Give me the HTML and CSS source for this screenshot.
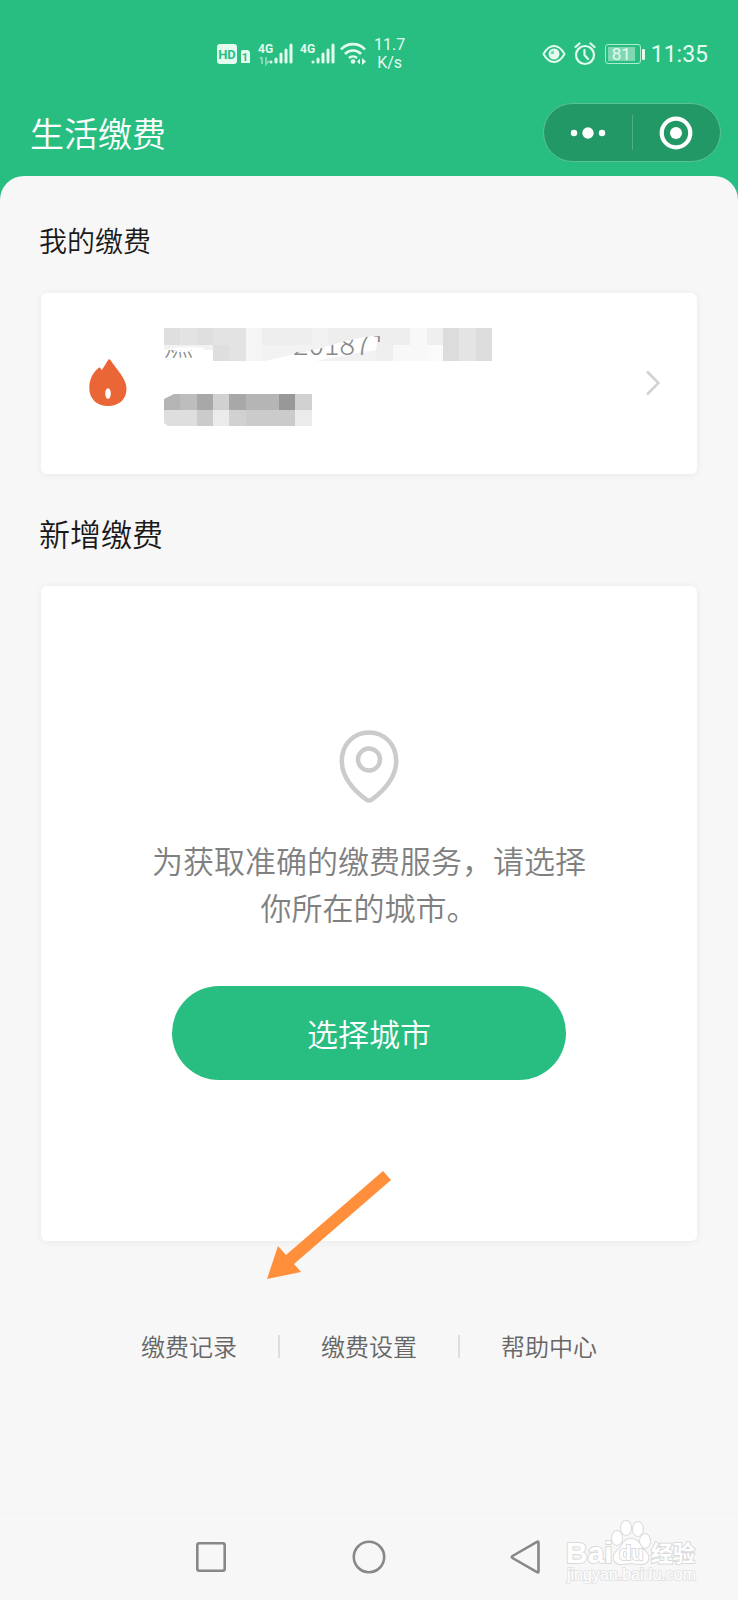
FILE: index.html
```
<!DOCTYPE html>
<html lang="zh-CN">
<head>
<meta charset="utf-8">
<meta name="viewport" content="width=device-width, initial-scale=1">
<title>生活缴费</title>
<link rel="stylesheet" href="styles.css">
</head>
<body>
<div class="status">
  <div class="status-left">
    <svg width="132" height="28" viewBox="0 0 132 28" aria-hidden="true">
      <rect x="0" y="4" width="20" height="20" rx="3" fill="#e4fbf0"/>
      <text x="10" y="19" class="hd">HD</text>
      <path d="M26 10h5l2 2v11h-9V12a2 2 0 0 1 2-2z" fill="#e4fbf0"/>
      <text x="28" y="21" class="sim">1</text>
      <text x="41" y="13" class="gen">4G</text>
      <path d="M45 17v7M43 19l2-2M49 17v7l3-3" fill="none" stroke="#7fd8b3" stroke-width="2"/>
      <g stroke="#e4fbf0" stroke-width="3" stroke-linecap="round">
        <path d="M54 22v0M59 19v3M64 14v8M69 10v12M74 5v17"/>
        <path d="M96 22v0M101 19v3M106 14v8M111 10v12M116 5v17"/>
      </g>
      <text x="83" y="13" class="gen">4G</text>
    </svg>
    <svg width="26" height="24" viewBox="0 0 26 24" aria-hidden="true">
      <g fill="none" stroke="#e4fbf0" stroke-width="2.6">
        <path d="M1 7.500a16 16 0 0 1 24 0M5 12a11 11 0 0 1 16 0M9 16a6 6 0 0 1 8 0"/>
      </g>
      <circle cx="13" cy="19.500" r="2.300" fill="#e4fbf0"/>
      <path d="M17 19.500l3-3v6zM26 19.500l-4-3.500v7z" fill="#e4fbf0"/>
    </svg>
    <div class="speed">11.7<br>K/s</div>
  </div>
  <div class="status-right">
    <svg width="24" height="20" viewBox="0 0 24 20" aria-hidden="true">
      <path d="M1.500 10Q6 2 12 2t10.500 8Q18 18 12 18T1.500 10z" fill="none" stroke="#e4fbf0" stroke-width="2"/>
      <circle cx="12" cy="10" r="5.500" fill="#e4fbf0"/>
      <path d="M8.500 10A3.500 3.500 0 0 1 12 6.500V10z" fill="#7fd8b3"/>
    </svg>
    <svg width="22" height="24" viewBox="0 0 22 24" aria-hidden="true">
      <g fill="none" stroke="#e4fbf0" stroke-width="2.200" stroke-linecap="round" stroke-linejoin="round">
        <circle cx="11" cy="13" r="9"/>
        <path d="M10.500 8v5l3.500 4M1.500 5l4-3.500M20.500 5l-4-3.500"/>
      </g>
    </svg>
    <div class="battery"><span class="level">81</span></div>
    <div class="clock">11:35</div>
  </div>
</div>
<header class="titlebar">
  <h1>生活缴费</h1>
  <div class="capsule">
    <button type="button" aria-label="更多">
      <svg width="36" height="12" viewBox="0 0 36 12"><g fill="#fff"><circle cx="4" cy="6" r="3.200"/><circle cx="18" cy="6" r="5.700"/><circle cx="32" cy="6" r="3.200"/></g></svg>
    </button>
    <span class="split"></span>
    <button type="button" aria-label="关闭">
      <svg width="34" height="34" viewBox="0 0 34 34"><circle cx="17" cy="17" r="14.300" fill="none" stroke="#fff" stroke-width="4.200"/><circle cx="17" cy="17" r="6" fill="#fff"/></svg>
    </button>
  </div>
</header>
<main class="panel">
  <h2 class="mine">我的缴费</h2>
  <a class="card account" href="#account">
    <svg class="flame" width="38" height="47" viewBox="0 0 38 47" aria-hidden="true">
      <path d="M19.500.500Q20.500-.3 21.500 1C26 9 37.500 19 37.500 29.500 37.500 40.500 30 47 19 47S.3 40 .3 29C.3 20 4 13.500 9.500 9c1-.8 2-.5 3 2.300C15 8 17 4 19.500.5z" fill="#eb6637"/>
      <ellipse cx="19" cy="34.500" rx="2.800" ry="5.200" fill="#fff"/>
    </svg>
    <svg class="masked" width="328" height="100" viewBox="0 0 328 100" role="img" aria-label="已隐藏的账户">
      <defs>
        <clipPath id="seen">
          <path d="M0 22h28v13H0zM128 25l30-5 20-6 13-3 17-3h8v6h-9v16h-79z"/>
        </clipPath>
      </defs>
      <g shape-rendering="crispEdges">
        <path fill="#dfdfdf" d="M0 0h16v17H0zM33 0h16v17H33z"/>
        <path fill="#e3e3e3" d="M16 0h17v17H16zM49 0h33v17H49zM65 17h17v16H65z"/>
        <path fill="#f5f5f5" d="M82 0h16v33H82z"/>
        <path fill="#eee" d="M98 0h50v17H98zM164 0h82v17H164z"/>
        <path fill="#f2f2f2" d="M148 0h16v17H148zM98 17h114v16H98zM0 17h49v5H0z"/>
        <path fill="#dedede" d="M49 17h16v16H49z"/>
        <path fill="#f8f8f8" d="M246 0h17v17H246zM229 17h34v16H229z"/>
        <path fill="#efefef" d="M263 0h16v17H263zM212 17h17v16H212z"/>
        <path fill="#fafafa" d="M263 17h16v16H263z"/>
        <path fill="#dcdcdc" d="M279 0h16v33H279zM312 0h16v33H312z"/>
        <path fill="#e4e4e4" d="M295 0h17v33H295z"/>
        <path fill="#b4b4b4" d="M0 66h16v16H0z"/>
        <path fill="#bdbdbd" d="M16 66h17v16H16z"/>
        <path fill="#a8a8a8" d="M33 66h16v16H33zM65 66h17v16H65z"/>
        <path fill="#d1d1d1" d="M49 66h16v16H49zM131 66h17v16h-17zM65 82h17v16H65z"/>
        <path fill="#b5b5b5" d="M82 66h33v16H82z"/>
        <path fill="#989898" d="M115 66h16v16h-16z"/>
        <path fill="#dedede" d="M0 82h33v16H0z"/>
        <path fill="#cbcbcb" d="M33 82h16v16H33zM82 82h49v16H82z"/>
        <path fill="#ebebeb" d="M49 82h16v16H49zM131 82h17v16h-17z"/>
      </g>
      <path fill="#fff" d="M0 22q20-5 40-2 0 8 8 13H0zM101 33l57-13 20-6 13-3 17-3 6 2-2 12-12 2-44 9zM0 66h10L0 71zM0 95l4 3H0z"/>
      <path fill="#f2f2f2" d="M152 33l46-9 14-1v10z"/>
      <g clip-path="url(#seen)" class="acct-text">
        <text x="0" y="28">燃</text>
        <text x="129" y="27">201871</text>
      </g>
    </svg>
    <svg class="chevron" width="16" height="26" viewBox="0 0 16 26" aria-hidden="true"><path d="M2 1.500L13.500 13 2 24.500" fill="none" stroke="#d2d2d2" stroke-width="2.500"/></svg>
  </a>
  <h2 class="new">新增缴费</h2>
  <section class="card city">
    <svg width="60" height="74" viewBox="0 0 60 74" aria-hidden="true">
      <g fill="none" stroke="#cbcbcb" stroke-width="4.500" stroke-linejoin="round">
        <path d="M30 2.500C14.500 2.500 2.800 14.500 2.800 31c0 16 12 30 24.700 38.700q2.500 1.600 5 0C45.200 61 57.200 47 57.200 31 57.200 14.500 45.500 2.500 30 2.500z"/>
        <circle cx="30" cy="29.500" r="11"/>
      </g>
    </svg>
    <p>为获取准确的缴费服务，请选择你所在的城市。</p>
    <button type="button" class="pick">选择城市</button>
    <svg class="arrow" width="124" height="110" viewBox="0 0 124 110" aria-hidden="true"><path d="M116 0l8 9-97 84 7 8-34 7 11-33 8 9z" fill="#ff8f3b"/></svg>
  </section>
  <nav class="links">
    <a href="#records">缴费记录</a>
    <a href="#settings">缴费设置</a>
    <a href="#help">帮助中心</a>
  </nav>
</main>
<footer class="sysnav">
  <button type="button" aria-label="最近任务"><svg width="34" height="34" viewBox="0 0 34 34"><rect x="3.300" y="3.300" width="27.400" height="27.400" rx="2"/></svg></button>
  <button type="button" aria-label="主屏幕"><svg width="34" height="34" viewBox="0 0 34 34"><circle cx="17" cy="17" r="15.200"/></svg></button>
  <button type="button" aria-label="返回"><svg width="34" height="34" viewBox="0 0 34 34"><path d="M27 1.800q1.500-.8 1.500 1v28.400q0 1.800-1.500 1L2.500 18q-1.500-1 0-2z"/></svg></button>
  <svg class="watermark" width="136" height="66" viewBox="0 0 136 66" role="img" aria-label="Baidu经验">
    <g class="mark">
      <ellipse cx="51" cy="17" rx="5" ry="7"/>
      <ellipse cx="60" cy="7" rx="5" ry="7"/>
      <ellipse cx="72" cy="8" rx="5" ry="7"/>
      <ellipse cx="79" cy="20" rx="5" ry="7"/>
      <path d="M65 18c8 0 9 7 13 11 9 8 3 15-5 14-6-1-10-1-16 0-9 1-13-7-5-14 5-4 5-11 13-11z"/>
      <text x="0" y="42" class="bai">Bai</text>
      <text x="53" y="39" class="du">du</text>
      <text x="85" y="40" class="exp">经验</text>
      <text x="1" y="59" class="site">jingyan.baidu.com</text>
    </g>
  </svg>
</footer>
</body>
</html>
```

FILE: styles.css
```
* {
  box-sizing: border-box;
}

body {
  margin: 0;
  min-height: 100vh;
  display: flex;
  flex-direction: column;
  background: #28be82;
  color: #1a1a1a;
  font-family: "Noto Sans CJK SC", sans-serif;
  font-weight: 350;
}

h1,
h2,
p {
  margin: 0;
  font-weight: 350;
}

button {
  border: 0;
  padding: 0;
  background: none;
  font: inherit;
  cursor: pointer;
}

a {
  color: inherit;
  text-decoration: none;
}

svg {
  display: block;
  flex: none;
}

.status {
  display: flex;
  justify-content: space-between;
  align-items: center;
  height: 92px;
  padding: 16px 30px 0 217px;
  color: #e4fbf0;
  font-family: Roboto, sans-serif;
  font-weight: 400;
}

.status-left {
  display: flex;
  align-items: center;
}

.status-left svg + svg {
  margin-left: -9px;
}

.hd,
.sim,
.gen {
  font-family: Roboto, sans-serif;
  font-weight: 700;
}

.hd {
  font-size: 13px;
  text-anchor: middle;
  fill: #28be82;
}

.sim {
  font-size: 11px;
  text-anchor: middle;
  fill: #28be82;
}

.gen {
  font-family: "Liberation Sans Narrow", Roboto, sans-serif;
  font-size: 12px;
  fill: #e4fbf0;
}

.speed {
  margin-left: 8px;
  font-size: 16px;
  line-height: 18px;
  text-align: center;
}

.status-right {
  display: flex;
  align-items: center;
  gap: 8px;
}

.battery {
  position: relative;
  width: 36px;
  height: 20px;
  margin: 0 2px 0 1px;
  padding: 2px;
  border: 1px solid #a9ecd0;
  border-radius: 3px;
}

.battery::after {
  content: "";
  position: absolute;
  left: 36px;
  top: 4px;
  width: 3px;
  height: 11px;
  border-radius: 1px;
  background: #e4fbf0;
}

.level {
  display: block;
  width: 27px;
  height: 14px;
  background: #7fd8b3;
  font-size: 17px;
  line-height: 15px;
  text-align: center;
}

.clock {
  font-size: 23px;
}

.titlebar {
  display: flex;
  justify-content: space-between;
  align-items: center;
  height: 84px;
  padding: 0 17px 3px 30px;
  color: #fff;
}

h1 {
  font-size: 34px;
  line-height: 48px;
}

.capsule {
  display: flex;
  align-items: center;
  width: 178px;
  height: 59px;
  border: 1px solid #5cc099;
  border-radius: 30px;
  background: #229867;
}

.capsule button {
  flex: 1;
  height: 100%;
  display: flex;
  align-items: center;
  justify-content: center;
}

.split {
  width: 1px;
  height: 35px;
  background: #4eae86;
}

.panel {
  flex: 1;
  padding: 40px 41px;
  border-radius: 24px 24px 0 0;
  background: #f7f7f7;
}

h2 {
  line-height: 48px;
  margin-left: -2px;
}

.mine {
  font-size: 28px;
}

.new {
  margin-top: 35px;
  font-size: 31px;
}

.card {
  position: relative;
  border-radius: 6px;
  background: #fff;
  box-shadow: 0 1px 8px rgba(0, 0, 0, 0.06);
}

.account {
  display: flex;
  align-items: center;
  height: 181px;
  margin-top: 29px;
  padding: 0 36px 2px 48px;
}

.flame {
  margin-right: 37px;
}

.masked {
  margin-bottom: 10px;
}

.acct-text {
  font-size: 29px;
  font-weight: 300;
  fill: #888;
}

.chevron {
  margin-left: auto;
}

.city {
  display: flex;
  flex-direction: column;
  align-items: center;
  margin-top: 29px;
  padding: 144px 48px 161px;
}

.city p {
  width: 100%;
  max-width: 448px;
  margin-top: 32px;
  color: #808080;
  font-size: 31px;
  line-height: 47px;
  text-align: center;
}

.pick {
  width: 60%;
  min-width: 394px;
  height: 94px;
  margin-top: 56px;
  padding-bottom: 2px;
  border-radius: 47px;
  background: #28be82;
  color: #fff;
  font-size: 31px;
}

.arrow {
  position: absolute;
  left: 226px;
  bottom: -40px;
}

.links {
  display: flex;
  justify-content: center;
  margin-top: 87px;
  color: #666;
  font-size: 24px;
  line-height: 36px;
}

.links a {
  display: flex;
  align-items: center;
}

.links a + a::before {
  content: "";
  width: 2px;
  height: 23px;
  margin: 0 41px;
  background: #dedede;
}

.sysnav {
  position: relative;
  display: flex;
  justify-content: center;
  gap: 124px;
  padding: 26px 0;
  border-top: 1px solid #f4f4f4;
  background: #f7f7f7;
}

.sysnav button svg {
  fill: none;
  stroke: #888;
  stroke-width: 2.6px;
}

.watermark {
  position: absolute;
  right: 36px;
  bottom: 13px;
  overflow: visible;
}

.mark {
  fill: #fff;
  stroke: #dadada;
  stroke-width: 2px;
  paint-order: stroke;
  font-family: "Liberation Sans", sans-serif;
  font-weight: 700;
}

.bai {
  font-size: 30px;
}

.du {
  font-size: 20px;
}

.exp {
  font-family: "Noto Sans CJK SC", sans-serif;
  font-size: 22px;
}

.site {
  font-size: 16px;
  font-weight: 400;
  stroke: #e4e4e4;
}
```
